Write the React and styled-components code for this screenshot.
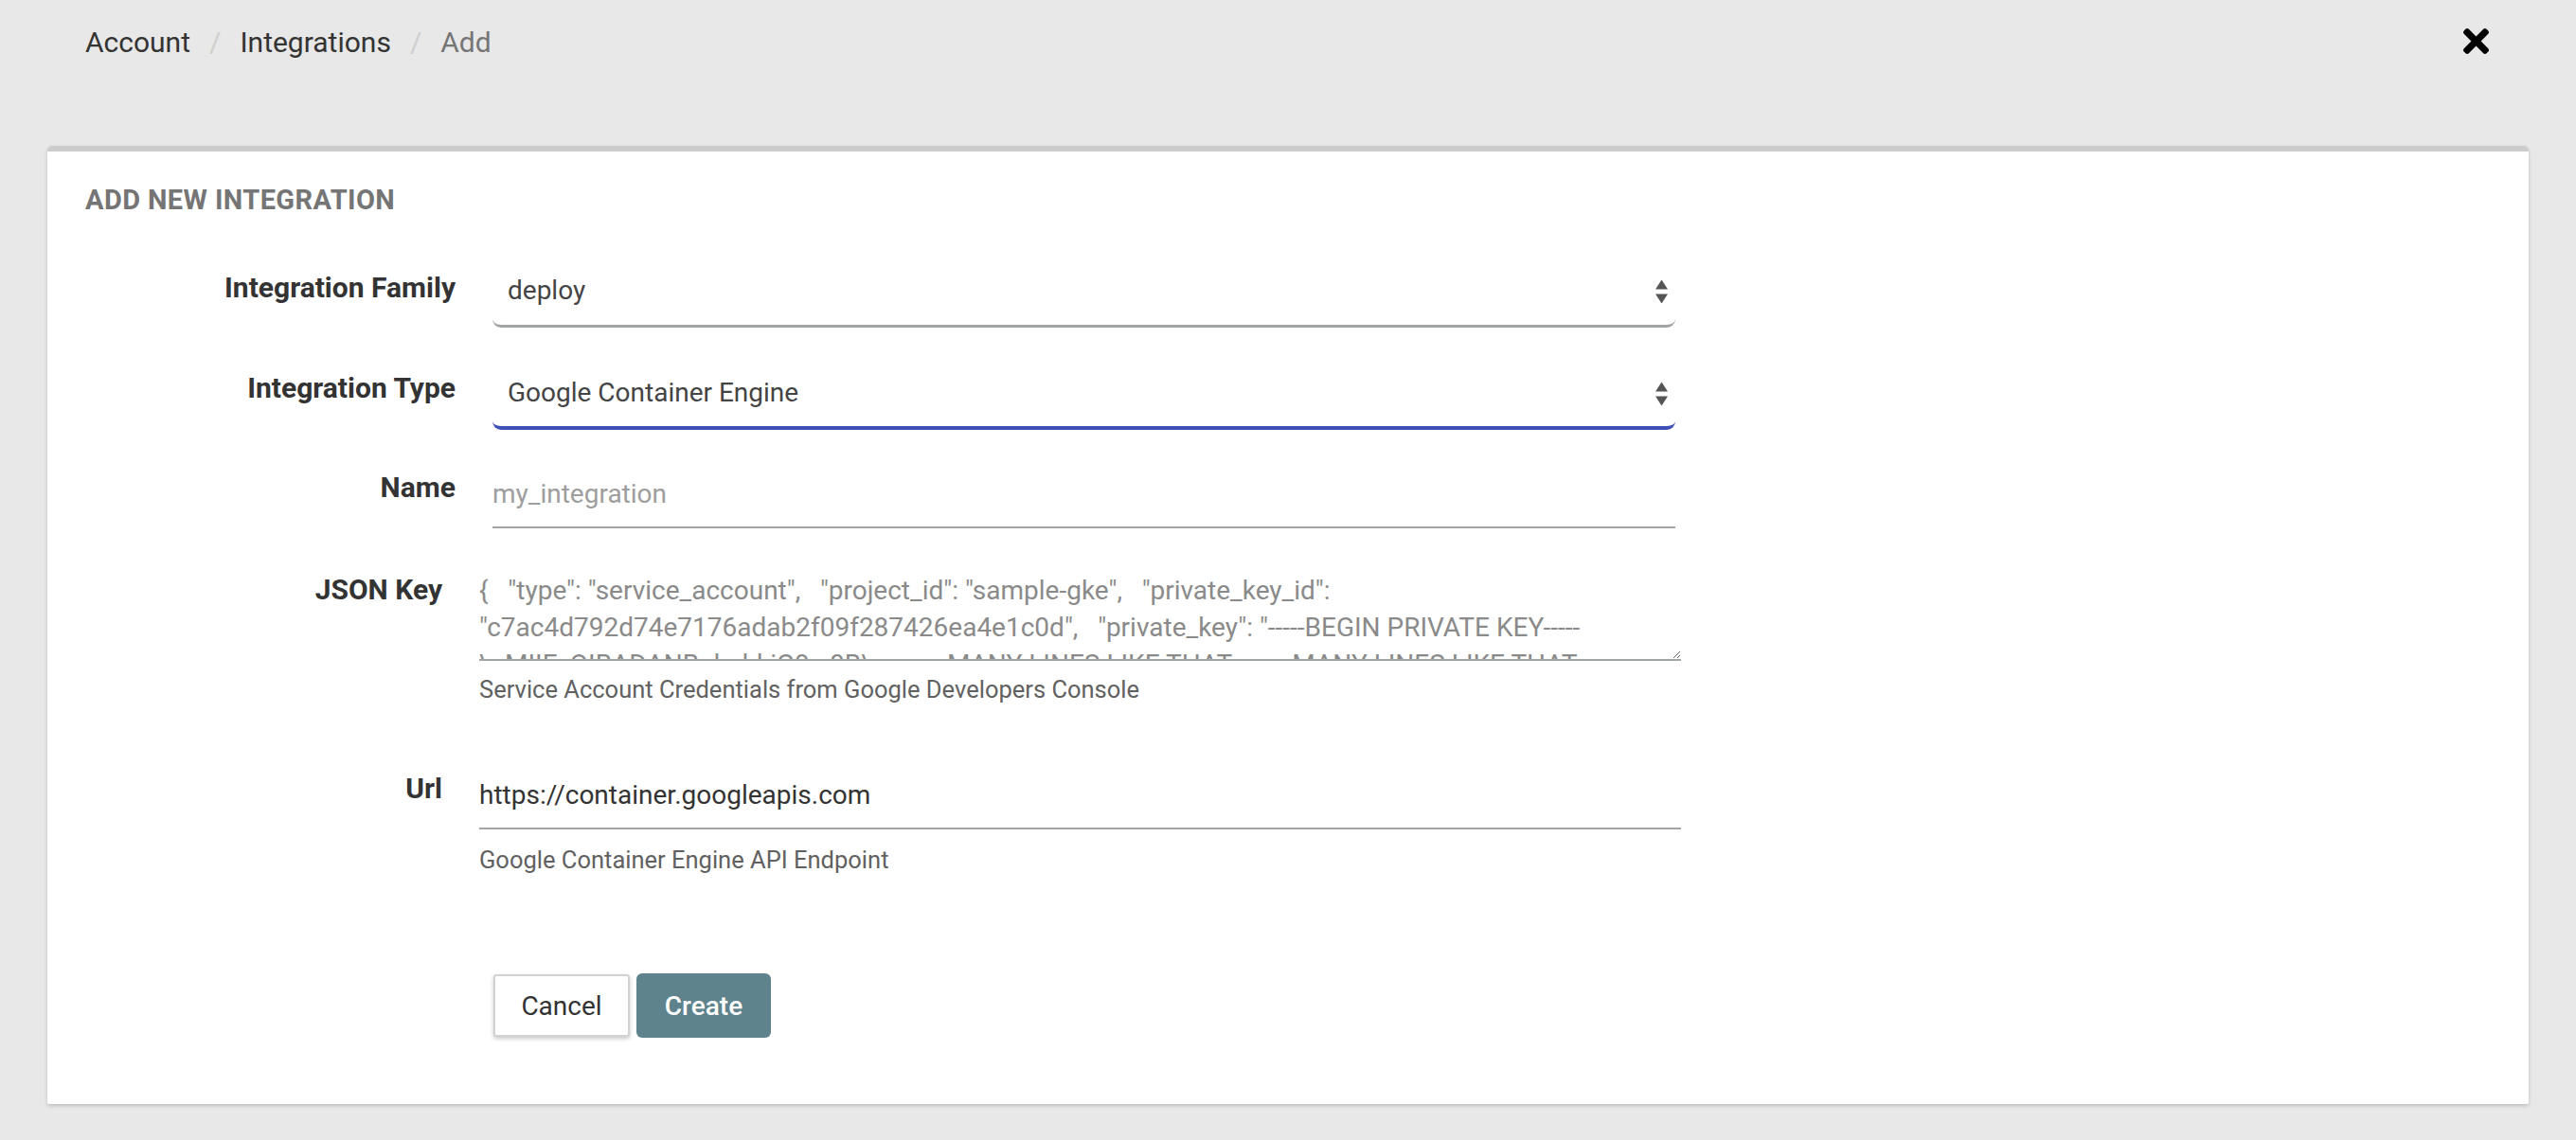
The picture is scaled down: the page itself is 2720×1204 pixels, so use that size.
import React from "react";
import styled, { createGlobalStyle } from "styled-components";

const GlobalStyle = createGlobalStyle`
  body {
    margin: 0;
    background: #e8e8e8;
    font-family: Roboto, "Liberation Sans", Arial, sans-serif;
  }
  * {
    box-sizing: border-box;
  }
`;

const Page = styled.div`
  min-height: 1204px;
`;

const TopBar = styled.header`
  height: 90px;
  display: flex;
  align-items: center;
  justify-content: space-between;
  padding: 0 92px 0 90px;
`;

const Crumbs = styled.nav`
  display: flex;
  align-items: center;
  font-size: 30px;
  line-height: 36px;
`;

const Crumb = styled.a`
  color: ${({ active }) => (active ? "#757575" : "#333")};
  text-decoration: none;
`;

const Sep = styled.span`
  color: #cfcfcf;
  margin: 0 20px;
`;

const CloseButton = styled.button`
  background: none;
  border: 0;
  padding: 0;
  display: flex;
  margin-top: -4px;
  cursor: pointer;
`;

const Card = styled.section`
  margin: 64px 50px 0;
  background: #fff;
  border-top: 6px solid #cccccc;
  border-radius: 5px 5px 2px 2px;
  box-shadow: 0 2px 4px rgba(0, 0, 0, 0.18);
  padding: 34px 40px 70px;
`;

const Title = styled.h2`
  margin: 0 0 42px;
  font-size: 29px;
  line-height: 34px;
  letter-spacing: 0.4px;
  font-weight: 700;
  color: #757575;
  text-transform: uppercase;
`;

const Row = styled.div`
  display: grid;
  grid-template-columns: ${({ wide }) => (wide ? "377px 1269px" : "391px 1249px")};
  column-gap: 39px;
  align-items: start;
  margin-bottom: ${({ gap }) => gap}px;
`;

const Label = styled.label`
  text-align: right;
  font-size: 30px;
  line-height: 36px;
  font-weight: 700;
  color: #333;
  padding-top: ${({ top }) => top}px;
`;

const Field = styled.div`
  display: flex;
  flex-direction: column;
`;

const SelectWrap = styled.div`
  position: relative;
`;

const Select = styled.select`
  appearance: none;
  width: 100%;
  height: 76px;
  border: 0;
  border-bottom: ${({ focused }) =>
    focused ? "4px solid #3f51b5" : "3px solid #a0a4a4"};
  border-radius: 0 0 9px 9px;
  background: #fff;
  padding: 0 50px 0 16px;
  font: inherit;
  font-size: 28px;
  color: #444;
  outline: none;
`;

const Arrows = styled.svg`
  position: absolute;
  right: 8px;
  top: 50%;
  transform: translateY(-50%);
  pointer-events: none;
`;

const TextInput = styled.input`
  width: 100%;
  height: 72px;
  border: 0;
  border-bottom: 2px solid #a0a4a4;
  padding: 0;
  font: inherit;
  font-size: 28px;
  color: #333;
  outline: none;
  background: transparent;

  &::placeholder {
    color: #9e9e9e;
  }
`;

const TextArea = styled.textarea`
  width: 100%;
  height: 98px;
  border: 0;
  border-bottom: 2px solid #a0a4a4;
  padding: 4px 0 0;
  font: inherit;
  font-size: 28px;
  line-height: 39px;
  color: #333;
  outline: none;
  resize: vertical;
  display: block;

  &::placeholder {
    color: #8a8a8a;
  }
`;

const Help = styled.div`
  margin-top: ${({ top }) => top}px;
  font-size: 25.5px;
  line-height: 32px;
  color: #616161;
`;

const Buttons = styled.div`
  display: flex;
  align-items: center;
  gap: 7px;
  margin-left: 431px;
`;

const Button = styled.button`
  font: inherit;
  font-size: 28px;
  cursor: pointer;
  width: ${({ primary }) => (primary ? "142px" : "144px")};
  height: ${({ primary }) => (primary ? "68px" : "66px")};
  border-radius: ${({ primary }) => (primary ? "6px" : "3px")};
  border: ${({ primary }) => (primary ? "0" : "2px solid #d2d2d2")};
  background: ${({ primary }) => (primary ? "#5f838d" : "#fff")};
  color: ${({ primary }) => (primary ? "#fff" : "#333")};
  font-weight: ${({ primary }) => (primary ? 500 : 400)};
  box-shadow: ${({ primary }) =>
    primary ? "none" : "0 2px 4px rgba(0, 0, 0, 0.22)"};
`;

const UpDown = () => (
  <Arrows width="13" height="25" viewBox="0 0 13 25">
    <polygon points="6.5,0 13,10 0,10" fill="#555" />
    <polygon points="0,15 13,15 6.5,25" fill="#555" />
  </Arrows>
);

const CloseIcon = () => (
  <svg width="27" height="27" viewBox="0 80 352 352">
    <path
      fill="#000"
      d="M242.72 256l100.07-100.07c12.28-12.28 12.28-32.19 0-44.48l-22.24-22.24c-12.28-12.28-32.19-12.28-44.48 0L176 189.28 75.93 89.21c-12.280-12.28-32.19-12.28-44.48 0L9.21 111.45c-12.28 12.28-12.28 32.19 0 44.48L109.28 256 9.21 356.07c-12.28 12.28-12.28 32.19 0 44.48l22.24 22.24c12.28 12.28 32.2 12.28 44.48 0L176 322.72l100.07 100.07c12.28 12.28 32.2 12.28 44.48 0l22.24-22.24c12.28-12.28 12.28-32.19 0-44.48L242.72 256z"
    />
  </svg>
);

const jsonPlaceholder =
  '{   "type": "service_account",   "project_id": "sample-gke",   "private_key_id": "c7ac4d792d74e7176adab2f09f287426ea4e1c0d",   "private_key": "-----BEGIN PRIVATE KEY-----\\nMIIEvQIBADANBgkqhkiG9w0B\\n   ...   MANY LINES LIKE THAT   ...   MANY LINES LIKE THAT   ...   -----END PRIVATE KEY-----\\n" }';

const App = () => {
  return (
    <Page>
      <GlobalStyle />
      <TopBar>
        <Crumbs>
          <Crumb href="#">Account</Crumb>
          <Sep>/</Sep>
          <Crumb href="#">Integrations</Crumb>
          <Sep>/</Sep>
          <Crumb active>Add</Crumb>
        </Crumbs>
        <CloseButton aria-label="Close">
          <CloseIcon />
        </CloseButton>
      </TopBar>

      <Card>
        <Title>Add new integration</Title>

        <Row gap={32}>
          <Label top={16}>Integration Family</Label>
          <SelectWrap>
            <Select defaultValue="deploy">
              <option value="deploy">deploy</option>
              <option value="notification">notification</option>
            </Select>
            <UpDown />
          </SelectWrap>
        </Row>

        <Row gap={32}>
          <Label top={14}>Integration Type</Label>
          <SelectWrap>
            <Select focused defaultValue="gke">
              <option value="gke">Google Container Engine</option>
              <option value="k8s">Kubernetes</option>
            </Select>
            <UpDown />
          </SelectWrap>
        </Row>

        <Row gap={42}>
          <Label top={11}>Name</Label>
          <TextInput placeholder="my_integration" />
        </Row>

        <Row wide gap={60}>
          <Label top={5}>JSON Key</Label>
          <Field>
            <TextArea placeholder={jsonPlaceholder} />
            <Help top={14}>
              Service Account Credentials from Google Developers Console
            </Help>
          </Field>
        </Row>

        <Row wide gap={104}>
          <Label top={11}>Url</Label>
          <Field>
            <TextInput defaultValue="https://container.googleapis.com" />
            <Help top={16}>Google Container Engine API Endpoint</Help>
          </Field>
        </Row>

        <Buttons>
          <Button>Cancel</Button>
          <Button primary>Create</Button>
        </Buttons>
      </Card>
    </Page>
  );
};

export default App;
